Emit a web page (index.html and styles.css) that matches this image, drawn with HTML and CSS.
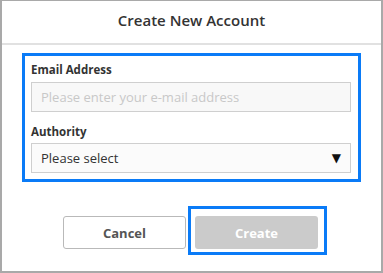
FILE: index.html
```html
<!DOCTYPE html>
<html lang="en">
<head>
  <meta charset="UTF-8" />
  <title>Create New Account</title>
  <link rel="stylesheet" href="styles.css">
</head>
<body>
  <div class="dialog">
    <header class="dialog-head">
      <h1>Create New Account</h1>
    </header>

    <form class="campos">
      <label for="email">Email Address</label>
      <input type="text" id="email" placeholder="Please enter your e-mail address">

      <label for="authority" class="segundo">Authority</label>
      <div class="select">
        <span>Please select</span>
        <span class="seta">&#9660;</span>
      </div>
    </form>

    <div class="botoes">
      <button type="button" class="cancelar">Cancel</button>
      <button type="button" class="criar">Create</button>
    </div>
  </div>
</body>
</html>
```

FILE: styles.css
```css
* { box-sizing: border-box; margin: 0; padding: 0; }

body {
  font-family: "Open Sans", "Noto Sans", sans-serif;
  background: #fff;
}

.dialog {
  width: 383px;
  height: 273px;
  border: 2px solid #a9a9a9;
  border-top-width: 1px;
  background: #fff;
}

.dialog-head {
  height: 44px;
  padding-bottom: 4px;
  border-bottom: 2px solid #e1e1e1;
  display: flex;
  align-items: center;
  justify-content: center;
}

.dialog-head h1 {
  font-size: 15px;
  font-weight: 600;
  color: #333;
}

.campos {
  margin: 8px 20px 0 20px;
  border: 3px solid #0a7bf7;
  padding: 6px 7px 6px 6px;
}

label {
  display: block;
  font-size: 11.5px;
  font-weight: bold;
  color: #333;
  line-height: 16px;
}

label.segundo {
  margin-top: 12px;
}

input {
  display: block;
  width: 100%;
  height: 30px;
  margin-top: 4px;
  padding: 0 9px;
  border: 1px solid #cfcfcf;
  background: #f8f8f8;
  font-family: inherit;
  font-size: 13px;
}

input::placeholder {
  color: #c8c8c8;
}

.select {
  height: 30px;
  margin-top: 3px;
  padding: 0 9px 0 9px;
  border: 1px solid #cfcfcf;
  background: #fbfbfb;
  display: flex;
  align-items: center;
  justify-content: space-between;
  font-size: 13px;
  color: #333;
}

.seta {
  font-family: "DejaVu Sans", sans-serif;
  font-size: 12px;
  color: #111;
}

.botoes {
  display: flex;
  justify-content: center;
  gap: 9px;
  margin-top: 34px;
  padding-right: 2px;
}

.botoes button {
  width: 123px;
  height: 33px;
  border-radius: 3px;
  font-family: inherit;
  font-size: 13px;
  font-weight: bold;
}

.cancelar {
  background: #fff;
  border: 1px solid #b9b9b9;
  color: #555;
}

.criar {
  position: relative;
  background: #cbcbcb;
  border: none;
  color: #fff;
}

/* destaque azul por cima do botão */
.criar::after {
  content: "";
  position: absolute;
  top: -10px;
  left: -7px;
  right: -9px;
  bottom: -6px;
  border: 3px solid #0a7bf7;
}
```
